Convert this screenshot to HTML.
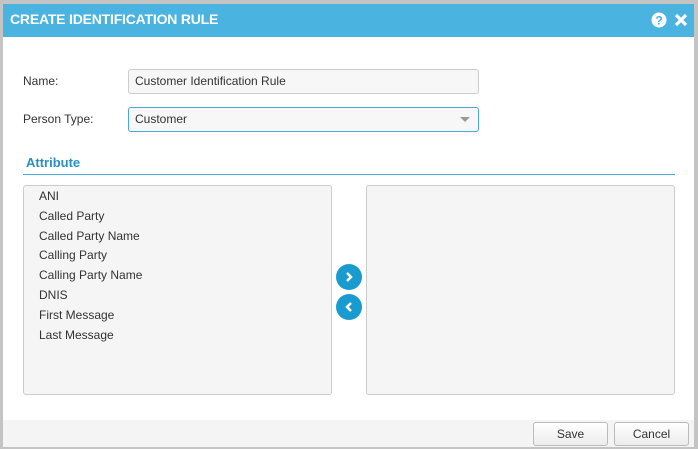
<!DOCTYPE html>
<html><head><style>
*{box-sizing:border-box;margin:0;padding:0}
body{width:698px;height:449px;background:#c4c4c4;font-family:"Liberation Sans",sans-serif;position:relative;overflow:hidden}
.win{position:absolute;left:3px;top:4px;width:691px;height:443px;background:#fff}
.hdr{position:absolute;left:0;top:0;width:691px;height:33px;background:#4ab3e0;color:#fff;font-weight:bold;font-size:14px;line-height:30px;padding-left:7px;letter-spacing:-0.2px}
.lbl{position:absolute;font-size:12px;color:#333}
.inp{position:absolute;left:125px;width:351px;height:25px;border:1px solid #ccc;border-radius:3px;background:#f7f7f7;font-size:12px;line-height:23px;padding-left:6px;color:#333}
.list{position:absolute;top:181px;width:309px;height:210px;border:1px solid #ccc;border-radius:3px;background:#f5f5f5}
.it{font-size:12px;color:#333;height:19.8px;padding-left:15px;line-height:19px}
.circ{position:absolute;left:333px;width:26px;height:26px;border-radius:50%;background:#1a9bd0}
.foot{position:absolute;left:0;top:416px;width:691px;height:27px;background:#f4f4f4}
.btn{position:absolute;top:2px;height:24px;border:1px solid #bbb;border-radius:3px;background:linear-gradient(#fff,#ececec);font-size:12px;color:#333;text-align:center;line-height:22px}
</style></head><body>
<div class="win">
<div class="hdr">CREATE IDENTIFICATION RULE
<svg style="position:absolute;left:648px;top:8px" width="16" height="16"><circle cx="8" cy="8" r="7.5" fill="#fff"/><text x="8" y="12.5" font-size="12" font-weight="bold" fill="#4ab3e0" text-anchor="middle" font-family="Liberation Sans">?</text></svg>
<svg style="position:absolute;left:671px;top:9px" width="14" height="14"><path d="M2 2L12 12M12 2L2 12" stroke="#fff" stroke-width="3.2"/></svg>
</div>
<div class="lbl" style="left:20px;top:70px">Name:</div>
<div class="inp" style="top:65px">Customer Identification Rule</div>
<div class="lbl" style="left:20px;top:108px">Person Type:</div>
<div class="inp" style="top:103px;border-color:#4aa8d8">Customer
<svg style="position:absolute;right:8px;top:9px" width="10" height="6"><path d="M0 0H10L5 5Z" fill="#999"/></svg></div>
<div style="position:absolute;left:23px;top:151px;font-size:13px;font-weight:bold;color:#2a8fc4">Attribute</div>
<div style="position:absolute;left:20px;top:170px;width:652px;height:1px;background:#4aa8d8"></div>
<div class="list" style="left:20px;padding-top:1px">
<div class="it">ANI</div><div class="it">Called Party</div><div class="it">Called Party Name</div><div class="it">Calling Party</div><div class="it">Calling Party Name</div><div class="it">DNIS</div><div class="it">First Message</div><div class="it">Last Message</div>
</div>
<div class="list" style="left:363px"></div>
<div class="circ" style="top:260px"><svg width="26" height="26"><path d="M11 9L15 13L11 17" stroke="#fff" stroke-width="2.5" fill="none"/></svg></div>
<div class="circ" style="top:290px"><svg width="26" height="26"><path d="M15 9L11 13L15 17" stroke="#fff" stroke-width="2.5" fill="none"/></svg></div>
<div class="foot">
<div class="btn" style="left:530px;width:75px">Save</div>
<div class="btn" style="left:611px;width:75px">Cancel</div>
</div>
</div>
</body></html>
